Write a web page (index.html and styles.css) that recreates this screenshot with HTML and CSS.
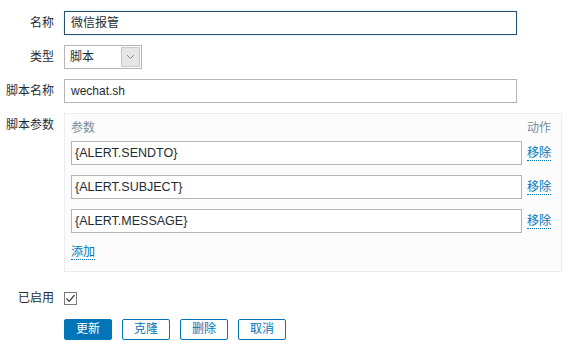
FILE: index.html
```html
<!DOCTYPE html>
<html>
<head>
<meta charset="utf-8">
<link rel="stylesheet" href="styles.css">
</head>
<body>
<form class="form">
  <div class="row">
    <label class="lbl">名称</label>
    <div class="field"><div class="input focus">微信报管</div></div>
  </div>
  <div class="row">
    <label class="lbl">类型</label>
    <div class="field">
      <div class="select">
        <span class="select-text">脚本</span>
        <span class="select-btn">
          <svg width="9" height="6" viewBox="0 0 9 6"><polyline points="1,1 4.5,4.5 8,1" fill="none" stroke="#8a8a8a" stroke-width="1"/></svg>
        </span>
      </div>
    </div>
  </div>
  <div class="row">
    <label class="lbl">脚本名称</label>
    <div class="field"><div class="input">wechat.sh</div></div>
  </div>
  <div class="row row-top">
    <label class="lbl lbl-top">脚本参数</label>
    <div class="field">
      <div class="params">
        <div class="params-head">
          <span class="ph-name">参数</span>
          <span class="ph-act">动作</span>
        </div>
        <div class="param-row">
          <div class="input pinput">{ALERT.SENDTO}</div>
          <a class="link">移除</a>
        </div>
        <div class="param-row">
          <div class="input pinput">{ALERT.SUBJECT}</div>
          <a class="link">移除</a>
        </div>
        <div class="param-row">
          <div class="input pinput">{ALERT.MESSAGE}</div>
          <a class="link">移除</a>
        </div>
        <div class="add-row"><a class="link">添加</a></div>
      </div>
    </div>
  </div>
  <div class="row row-check">
    <label class="lbl">已启用</label>
    <div class="field">
      <span class="checkbox">
        <svg width="11" height="11" viewBox="0 0 11 11"><polyline points="1.5,5.5 4.2,8.3 9.5,2" fill="none" stroke="#3a3a3a" stroke-width="1.2"/></svg>
      </span>
    </div>
  </div>
  <div class="row row-buttons">
    <span class="lbl"></span>
    <div class="field buttons">
      <button type="button" class="btn primary">更新</button>
      <button type="button" class="btn">克隆</button>
      <button type="button" class="btn">删除</button>
      <button type="button" class="btn">取消</button>
    </div>
  </div>
</form>
</body>
</html>
```

FILE: styles.css
```css
html, body {
  margin: 0;
  padding: 0;
  background: #ffffff;
}
body {
  font-family: "Liberation Sans", Arial, "Noto Sans CJK SC", sans-serif;
  font-size: 12px;
  color: #1f2c33;
}
.form {
  display: flex;
  flex-direction: column;
  gap: 10px;
  padding-top: 11px;
}
.row {
  display: flex;
  align-items: center;
  gap: 10px;
}
.row-top {
  align-items: flex-start;
}
.lbl {
  width: 54px;
  flex: none;
  text-align: right;
  white-space: nowrap;
  line-height: 24px;
}
.lbl-top {
  line-height: 16px;
  padding-top: 4px;
}
.field {
  flex: none;
}
.input {
  box-sizing: border-box;
  width: 453px;
  height: 24px;
  line-height: 22px;
  border: 1px solid #b5b5b5;
  padding: 0 6px;
  background: #ffffff;
  color: #1f2c33;
  font-size: 12px;
  white-space: nowrap;
}
.input.pinput {
  padding: 0 3px;
  font-size: 12.5px;
}
.input.focus {
  border-color: #2b4d6c;
  box-shadow: 0 0 3px rgba(150, 225, 245, 0.55);
}
.select {
  box-sizing: border-box;
  width: 78px;
  height: 24px;
  border: 1px solid #b5b5b5;
  display: flex;
  align-items: stretch;
  background: #fff;
}
.select-text {
  flex: 1;
  line-height: 22px;
  padding-left: 5px;
}
.select-btn {
  width: 17px;
  margin: 1px;
  background: #e6e6e6;
  border: 1px solid #c9c9c9;
  display: flex;
  align-items: center;
  justify-content: center;
}
.params {
  box-sizing: border-box;
  width: 498px;
  border: 1px solid #ebeef0;
  background: #fcfcfc;
  padding: 3px 10px 10px 6px;
  display: flex;
  flex-direction: column;
  gap: 10px;
}
.params-head {
  display: flex;
  justify-content: space-between;
  height: 24px;
  line-height: 22px;
  color: #768d99;
  margin-bottom: -10px;
}
.ph-act {
  width: 24px;
  text-align: right;
}
.param-row {
  display: flex;
  align-items: center;
  gap: 5px;
}
.link {
  color: #0275b8;
  border-bottom: 1px dotted #0275b8;
  line-height: 14px;
  cursor: pointer;
  white-space: nowrap;
}
.add-row {
  height: 18px;
  display: flex;
  align-items: center;
}
.row-check {
  padding-top: 4px;
}
.row-check .lbl {
  line-height: 24px;
}
.checkbox {
  box-sizing: border-box;
  width: 13px;
  height: 13px;
  border: 1px solid #7a7a7a;
  display: flex;
  align-items: center;
  justify-content: center;
  background: #fff;
}
.row-buttons {
  margin-top: -1px;
}
.buttons {
  display: flex;
  gap: 10px;
}
.btn {
  box-sizing: border-box;
  width: 48px;
  height: 21px;
  padding: 0;
  border: 1px solid #0275b8;
  border-radius: 2px;
  background: #ffffff;
  color: #0275b8;
  font-family: "Liberation Sans", Arial, "Noto Sans CJK SC", sans-serif;
  font-size: 12px;
  line-height: 19px;
}
.btn.primary {
  background: #0275b8;
  color: #ffffff;
}
```
